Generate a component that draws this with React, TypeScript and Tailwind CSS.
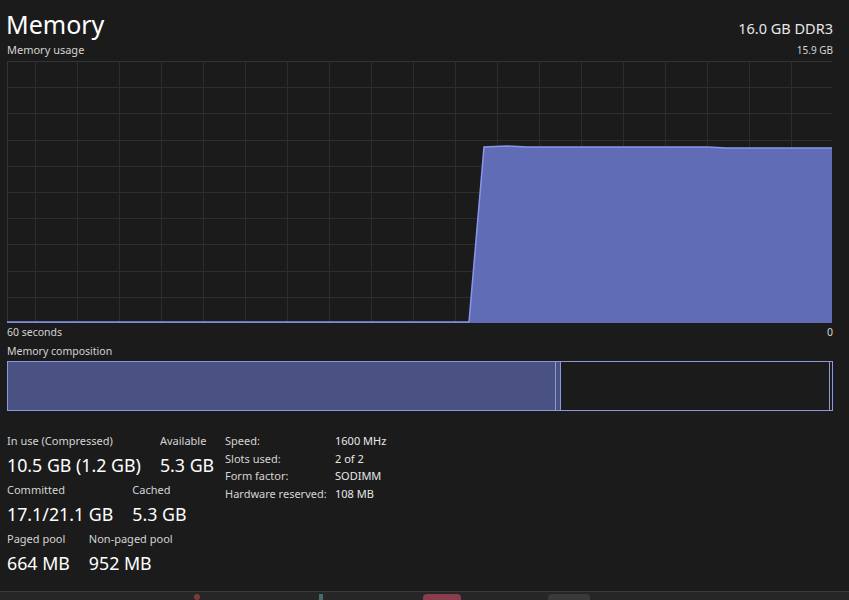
import React from "react";

const W = 826;
const H = 262;

function Chart() {
  const vLines: number[] = [];
  for (let x = 28; x < W; x += 42) vLines.push(x);
  const hLines: number[] = [];
  for (let i = 1; i < 10; i++) hLines.push(Math.round((i * H) / 10) + 0.5);
  const pts = "0,261 462,261 477,86 500,85 520,86 700,86 720,87 826,87";
  return (
    <svg width={W} height={H} className="block">
      <rect x={0.5} y={0.5} width={W - 1} height={H - 1} fill="#1b1b1b" stroke="#343434" />
      {vLines.map((x) => (
        <line key={x} x1={x + 0.5} y1={0} x2={x + 0.5} y2={H} stroke="#2d2d2d" />
      ))}
      {hLines.map((y) => (
        <line key={y} x1={0} y1={y} x2={W} y2={y} stroke="#2d2d2d" />
      ))}
      <polygon points={`${pts} 826,262 0,262`} fill="#606db6" />
      <polyline points={pts} fill="none" stroke="#8796ea" strokeWidth={1.5} />
      <line x1={825.5} y1={0} x2={825.5} y2={H} stroke="#1b1b1b" />
    </svg>
  );
}

export default function App() {
  const font = { fontFamily: '"Noto Sans", "Open Sans", Arial, sans-serif' };
  return (
    <div
      className="w-[849px] h-[600px] bg-[#1b1b1b] text-[#e6e6e6] overflow-hidden flex flex-col"
      style={font}
    >
      <div className="pl-[7px] flex flex-col w-[833px]">
        <div className="flex justify-between items-end h-[40px]">
          <div className="text-[25px] leading-[26px] text-white -ml-[1px] pb-[3px]">Memory</div>
          <div className="text-[14.5px] leading-[15px] text-[#e8e8e8] pb-[4px]">16.0 GB DDR3</div>
        </div>
        <div className="flex justify-between text-[11px] leading-[20px] text-[#d4d4d4] h-[20px]">
          <span>Memory usage</span>
          <span className="text-[10px]">15.9 GB</span>
        </div>
        <div className="h-[1px]" />
        <Chart />
        <div className="flex justify-between text-[10.5px] leading-[18px] text-[#d4d4d4] h-[18px]">
          <span>60 seconds</span>
          <span>0</span>
        </div>
        <div className="text-[10.5px] leading-[20px] text-[#d4d4d4] h-[20px]">Memory composition</div>
        <div className="flex h-[50px] w-[826px]">
          <div className="w-[549px] bg-[#4a5284] border border-[#8c98dc]" />
          <div className="w-[5px] bg-[#4a5284] border border-[#8c98dc] border-l-0" />
          <div className="flex-1 border border-[#8c98dc] border-l-0 bg-[#1b1b1b]" />
          <div className="w-[3px] border border-[#8c98dc] border-l-0" />
        </div>
        <div className="flex items-start mt-[22px]">
          <div className="flex flex-col w-[218px]">
            <div className="flex gap-[19px]">
              <div className="flex flex-col">
                <span className="text-[11px] leading-[15px] text-[#d4d4d4]">In use (Compressed)</span>
                <span className="text-[17.8px] leading-[34px] text-white">10.5 GB (1.2 GB)</span>
              </div>
              <div className="flex flex-col">
                <span className="text-[11px] leading-[15px] text-[#d4d4d4]">Available</span>
                <span className="text-[17.8px] leading-[34px] text-white">5.3 GB</span>
              </div>
            </div>
            <div className="flex gap-[19px]">
              <div className="flex flex-col">
                <span className="text-[11px] leading-[15px] text-[#d4d4d4]">Committed</span>
                <span className="text-[17.8px] leading-[34px] text-white">17.1/21.1 GB</span>
              </div>
              <div className="flex flex-col">
                <span className="text-[11px] leading-[15px] text-[#d4d4d4]">Cached</span>
                <span className="text-[17.8px] leading-[34px] text-white">5.3 GB</span>
              </div>
            </div>
            <div className="flex gap-[19px]">
              <div className="flex flex-col">
                <span className="text-[11px] leading-[15px] text-[#d4d4d4]">Paged pool</span>
                <span className="text-[17.8px] leading-[34px] text-white">664 MB</span>
              </div>
              <div className="flex flex-col">
                <span className="text-[11px] leading-[15px] text-[#d4d4d4]">Non-paged pool</span>
                <span className="text-[17.8px] leading-[34px] text-white">952 MB</span>
              </div>
            </div>
          </div>
          <div className="grid grid-cols-[110px_auto] content-start text-[11px] leading-[17.5px] -mt-[1px]">
            <span className="text-[#d4d4d4]">Speed:</span>
            <span className="text-[#e8e8e8]">1600 MHz</span>
            <span className="text-[#d4d4d4]">Slots used:</span>
            <span className="text-[#e8e8e8]">2 of 2</span>
            <span className="text-[#d4d4d4]">Form factor:</span>
            <span className="text-[#e8e8e8]">SODIMM</span>
            <span className="text-[#d4d4d4]">Hardware reserved:</span>
            <span className="text-[#e8e8e8]">108 MB</span>
          </div>
        </div>
      </div>
      <div className="mt-auto h-[9px] border-t border-[#3a3a3a] bg-[#262626] relative">
        <div className="absolute left-[194px] top-[2px] w-[6px] h-[6px] rounded-full bg-[#7a3a3a]" />
        <div className="absolute left-[319px] top-[2px] w-[4px] h-[6px] bg-[#4a6a6a]" />
        <div className="absolute left-[423px] top-[2px] w-[38px] h-[8px] rounded-t-[4px] bg-[#8a3e4c]" />
        <div className="absolute left-[548px] top-[2px] w-[42px] h-[8px] rounded-t-[4px] bg-[#3a3a3a]" />
      </div>
    </div>
  );
}
